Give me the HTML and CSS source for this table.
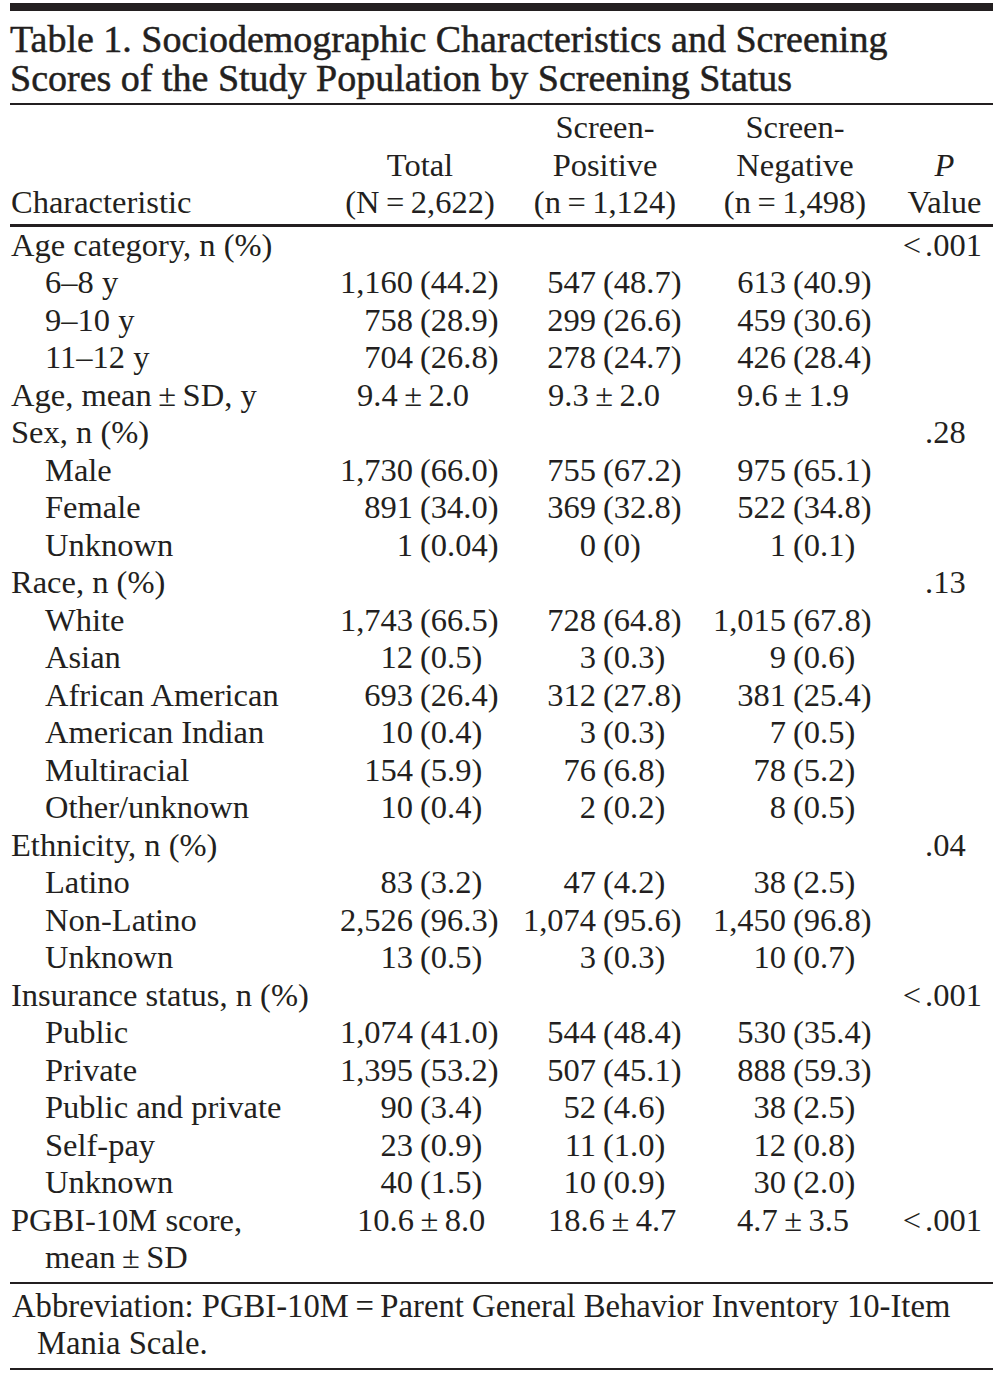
FILE: index.html
```html
<!DOCTYPE html>
<html lang="en">
<head>
<meta charset="utf-8">
<title>Table 1</title>
<link rel="stylesheet" href="styles.css">
</head>
<body>
<div class="page">
  <div class="topbar"></div>
  <h1 class="title">Table 1. Sociodemographic Characteristics and Screening<br>Scores of the Study Population by Screening Status</h1>
  <div class="rule thin"></div>

  <div class="row head">
    <div class="lbl">Characteristic</div>
    <div class="hc c-t">Total<br>(N&#8201;=&#8201;2,622)</div>
    <div class="hc c-p">Screen-<br>Positive<br>(n&#8201;=&#8201;1,124)</div>
    <div class="hc c-n">Screen-<br>Negative<br>(n&#8201;=&#8201;1,498)</div>
    <div class="hc c-v"><i>P</i><br>Value</div>
  </div>
  <div class="rule thick"></div>

  <div class="body">
    <div class="row"><div class="lbl">Age category, n (%)</div><div class="pre">&lt;</div><div class="pv">.001</div></div>
    <div class="row"><div class="lbl ind">6–8 y</div><div class="cnt">1,160</div><div class="pct">(44.2)</div><div class="cnt">547</div><div class="pct">(48.7)</div><div class="cnt">613</div><div class="pct">(40.9)</div></div>
    <div class="row"><div class="lbl ind">9–10 y</div><div class="cnt">758</div><div class="pct">(28.9)</div><div class="cnt">299</div><div class="pct">(26.6)</div><div class="cnt">459</div><div class="pct">(30.6)</div></div>
    <div class="row"><div class="lbl ind">11–12 y</div><div class="cnt">704</div><div class="pct">(26.8)</div><div class="cnt">278</div><div class="pct">(24.7)</div><div class="cnt">426</div><div class="pct">(28.4)</div></div>
    <div class="row"><div class="lbl">Age, mean&#8201;±&#8201;SD, y</div><div class="mean m-t">9.4&#8201;±&#8201;2.0</div><div class="mean m-p">9.3&#8201;±&#8201;2.0</div><div class="mean m-n">9.6&#8201;±&#8201;1.9</div></div>
    <div class="row"><div class="lbl">Sex, n (%)</div><div class="pre"></div><div class="pv">.28</div></div>
    <div class="row"><div class="lbl ind">Male</div><div class="cnt">1,730</div><div class="pct">(66.0)</div><div class="cnt">755</div><div class="pct">(67.2)</div><div class="cnt">975</div><div class="pct">(65.1)</div></div>
    <div class="row"><div class="lbl ind">Female</div><div class="cnt">891</div><div class="pct">(34.0)</div><div class="cnt">369</div><div class="pct">(32.8)</div><div class="cnt">522</div><div class="pct">(34.8)</div></div>
    <div class="row"><div class="lbl ind">Unknown</div><div class="cnt">1</div><div class="pct">(0.04)</div><div class="cnt">0</div><div class="pct">(0)</div><div class="cnt">1</div><div class="pct">(0.1)</div></div>
    <div class="row"><div class="lbl">Race, n (%)</div><div class="pre"></div><div class="pv">.13</div></div>
    <div class="row"><div class="lbl ind">White</div><div class="cnt">1,743</div><div class="pct">(66.5)</div><div class="cnt">728</div><div class="pct">(64.8)</div><div class="cnt">1,015</div><div class="pct">(67.8)</div></div>
    <div class="row"><div class="lbl ind">Asian</div><div class="cnt">12</div><div class="pct">(0.5)</div><div class="cnt">3</div><div class="pct">(0.3)</div><div class="cnt">9</div><div class="pct">(0.6)</div></div>
    <div class="row"><div class="lbl ind">African American</div><div class="cnt">693</div><div class="pct">(26.4)</div><div class="cnt">312</div><div class="pct">(27.8)</div><div class="cnt">381</div><div class="pct">(25.4)</div></div>
    <div class="row"><div class="lbl ind">American Indian</div><div class="cnt">10</div><div class="pct">(0.4)</div><div class="cnt">3</div><div class="pct">(0.3)</div><div class="cnt">7</div><div class="pct">(0.5)</div></div>
    <div class="row"><div class="lbl ind">Multiracial</div><div class="cnt">154</div><div class="pct">(5.9)</div><div class="cnt">76</div><div class="pct">(6.8)</div><div class="cnt">78</div><div class="pct">(5.2)</div></div>
    <div class="row"><div class="lbl ind">Other/unknown</div><div class="cnt">10</div><div class="pct">(0.4)</div><div class="cnt">2</div><div class="pct">(0.2)</div><div class="cnt">8</div><div class="pct">(0.5)</div></div>
    <div class="row"><div class="lbl">Ethnicity, n (%)</div><div class="pre"></div><div class="pv">.04</div></div>
    <div class="row"><div class="lbl ind">Latino</div><div class="cnt">83</div><div class="pct">(3.2)</div><div class="cnt">47</div><div class="pct">(4.2)</div><div class="cnt">38</div><div class="pct">(2.5)</div></div>
    <div class="row"><div class="lbl ind">Non-Latino</div><div class="cnt">2,526</div><div class="pct">(96.3)</div><div class="cnt">1,074</div><div class="pct">(95.6)</div><div class="cnt">1,450</div><div class="pct">(96.8)</div></div>
    <div class="row"><div class="lbl ind">Unknown</div><div class="cnt">13</div><div class="pct">(0.5)</div><div class="cnt">3</div><div class="pct">(0.3)</div><div class="cnt">10</div><div class="pct">(0.7)</div></div>
    <div class="row"><div class="lbl">Insurance status, n (%)</div><div class="pre">&lt;</div><div class="pv">.001</div></div>
    <div class="row"><div class="lbl ind">Public</div><div class="cnt">1,074</div><div class="pct">(41.0)</div><div class="cnt">544</div><div class="pct">(48.4)</div><div class="cnt">530</div><div class="pct">(35.4)</div></div>
    <div class="row"><div class="lbl ind">Private</div><div class="cnt">1,395</div><div class="pct">(53.2)</div><div class="cnt">507</div><div class="pct">(45.1)</div><div class="cnt">888</div><div class="pct">(59.3)</div></div>
    <div class="row"><div class="lbl ind">Public and private</div><div class="cnt">90</div><div class="pct">(3.4)</div><div class="cnt">52</div><div class="pct">(4.6)</div><div class="cnt">38</div><div class="pct">(2.5)</div></div>
    <div class="row"><div class="lbl ind">Self-pay</div><div class="cnt">23</div><div class="pct">(0.9)</div><div class="cnt">11</div><div class="pct">(1.0)</div><div class="cnt">12</div><div class="pct">(0.8)</div></div>
    <div class="row"><div class="lbl ind">Unknown</div><div class="cnt">40</div><div class="pct">(1.5)</div><div class="cnt">10</div><div class="pct">(0.9)</div><div class="cnt">30</div><div class="pct">(2.0)</div></div>
    <div class="row top"><div class="lbl">PGBI-10M score,<span class="sub">mean&#8201;±&#8201;SD</span></div><div class="mean m-t">10.6&#8201;±&#8201;8.0</div><div class="mean m-p">18.6&#8201;±&#8201;4.7</div><div class="mean m-n">4.7&#8201;±&#8201;3.5</div><div class="pre">&lt;</div><div class="pv">.001</div></div>
  </div>
  <div class="rule thin"></div>
  <p class="foot">Abbreviation: PGBI-10M&#8201;=&#8201;Parent General Behavior Inventory 10-Item<span class="sub2">Mania Scale.</span></p>
  <div class="rule thin"></div>
</div>
</body>
</html>
```
FILE: styles.css
```css
html, body {
  margin: 0;
  padding: 0;
  background: #ffffff;
}
body {
  font-family: "Liberation Serif", "Times New Roman", serif;
  color: #231f20;
}
.page {
  width: 983px;
  margin-left: 10px;
  padding-top: 3px;
}
.topbar {
  height: 8px;
  background: #231f20;
}
.title {
  margin: 9px 0 5px 0;
  font-size: 38px;
  line-height: 39px;
  font-weight: normal;
  -webkit-text-stroke: 0.5px #231f20;
  letter-spacing: 0;
}
.rule {
  background: #231f20;
}
.rule.thin {
  height: 2px;
}
.rule.thick {
  height: 3px;
}
.row {
  display: grid;
  grid-template-columns: 320px 83px 97px 86px 104px 86px 104px 35px 68px;
  font-size: 32.5px;
  line-height: 37.5px;
  white-space: nowrap;
}
.row.head {
  margin-top: 4px;
  padding-bottom: 2px;
  align-items: end;
}
.row.top {
  align-items: start;
}
.lbl {
  grid-column: 1;
  padding-left: 1px;
}
.lbl.ind {
  padding-left: 35px;
}
.sub {
  display: block;
  padding-left: 34px;
}
.hc {
  text-align: center;
}
.c-t { grid-column: 2 / 4; }
.c-p { grid-column: 4 / 6; }
.c-n { grid-column: 6 / 8; }
.c-v { grid-column: 8 / 10; padding-left: 6px; }
.cnt {
  text-align: right;
}
.pct {
  padding-left: 7px;
}
.mean.m-t { grid-column: 2 / 4; padding-left: 27px; }
.mean.m-p { grid-column: 4 / 6; padding-left: 38px; }
.mean.m-n { grid-column: 6 / 8; padding-left: 37px; }
.pre {
  grid-column: 8;
  text-align: right;
  padding-right: 4px;
}
.pv {
  grid-column: 9;
}
.body {
  padding-bottom: 5px;
}
.foot {
  margin: 4px 0 5px 0;
  font-size: 32.7px;
  line-height: 37.5px;
  padding-left: 2px;
  white-space: nowrap;
}
.sub2 {
  display: block;
  padding-left: 25px;
}
```
